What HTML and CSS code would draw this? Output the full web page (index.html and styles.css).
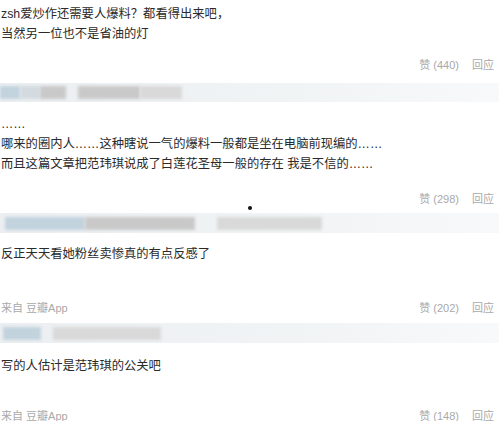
FILE: index.html
```html
<!DOCTYPE html>
<html lang="zh-CN">
<head>
    <meta charset="UTF-8">
    <meta name="viewport" content="width=device-width, initial-scale=1.0">
    <title>评论</title>
    <link rel="stylesheet" href="styles.css">
</head>
<body>
    <div class="page">
        <!-- Komentar 1 -->
        <div class="text">zsh爱炒作还需要人爆料？都看得出来吧，<br>当然另一位也不是省油的灯</div>
        <div class="meta m1">
            <span class="from"></span>
            <span class="acts">赞 (440)<span class="reply">回应</span></span>
        </div>

        <!-- Header komentar 2 (diburamkan) -->
        <div class="bar b1">
            <span class="blk blue" style="width:20px"></span>
            <span class="blk pale" style="width:20px"></span>
            <span class="blk gray" style="width:26px"></span>
            <span class="gap" style="width:12px"></span>
            <span class="blk gray" style="width:62px"></span>
            <span class="blk light" style="width:42px"></span>
        </div>
        <div class="text t2">……<br>哪来的圈内人……这种瞎说一气的爆料一般都是坐在电脑前现编的……<br>而且这篇文章把范玮琪说成了白莲花圣母一般的存在 我是不信的……</div>
        <div class="meta m2">
            <span class="from"></span>
            <span class="acts">赞 (298)<span class="reply">回应</span></span>
        </div>

        <!-- Header komentar 3 -->
        <div class="bar b2">
            <span class="dot"></span>
            <span class="gap" style="width:5px"></span>
            <span class="blk blue" style="width:80px"></span>
            <span class="blk gray" style="width:110px"></span>
            <span class="gap" style="width:22px"></span>
            <span class="blk light" style="width:105px"></span>
        </div>
        <div class="text t3">反正天天看她粉丝卖惨真的有点反感了</div>
        <div class="meta m3">
            <span class="from">来自 豆瓣App</span>
            <span class="acts">赞 (202)<span class="reply">回应</span></span>
        </div>

        <!-- Header komentar 4 -->
        <div class="bar b3">
            <span class="gap" style="width:3px"></span>
            <span class="blk blue" style="width:38px"></span>
            <span class="gap" style="width:12px"></span>
            <span class="blk light" style="width:108px"></span>
        </div>
        <div class="text t4">写的人估计是范玮琪的公关吧</div>
        <div class="meta m4">
            <span class="from">来自 豆瓣App</span>
            <span class="acts">赞 (148)<span class="reply">回应</span></span>
        </div>
    </div>
</body>
</html>
```

FILE: styles.css
```css
/* Reset */
* {
    margin: 0;
    padding: 0;
    box-sizing: border-box;
}

body {
    background: #fff;
    font-family: "Liberation Sans", "Noto Sans CJK SC", sans-serif;
    overflow: hidden;
}

.page {
    padding: 4px 5px 0 1px;
}

/* Isi komentar */
.text {
    font-size: 12.3px;
    line-height: 20px;
    color: #2a2a2a;
}

.t2 { margin-top: 12px; }
.t3 { margin-top: 11px; }
.t4 { margin-top: 13px; }

/* Baris bawah: sumber + suka/balas */
.meta {
    display: flex;
    justify-content: space-between;
    align-items: center;
    height: 20px;
    font-size: 11px;
    color: #a9a9a9;
}

.m1 { margin-top: 10px; }
.m2 { margin-top: 14px; }
.m3 { margin-top: 33px; }
.m4 { margin-top: 29px; }

.reply {
    margin-left: 13px;
}

/* Header komentar yang diburamkan */
.bar {
    position: relative;
    display: flex;
    align-items: center;
    height: 19px;
    margin-left: -1px;
    margin-right: -5px;
    background: linear-gradient(90deg, #eceff1, #f1f4f5 60%, #f7f9fa);
}

.b1 { margin-top: 9px; }
.b2 { margin-top: 5px; height: 20px; }
.b3 { margin-top: 6px; height: 20px; }

.blk {
    height: 13px;
    filter: blur(1.5px);
}

.blue  { background: #c2d3de; }
.pale  { background: #d3dbe0; }
.gray  { background: #c9c9c9; }
.light { background: #d9d9d9; }

.gap {
    flex: none;
}

/* Titik kecil di atas header */
.dot {
    position: absolute;
    top: -7px;
    left: 248px;
    width: 4px;
    height: 4px;
    border-radius: 50%;
    background: #111;
}
```
